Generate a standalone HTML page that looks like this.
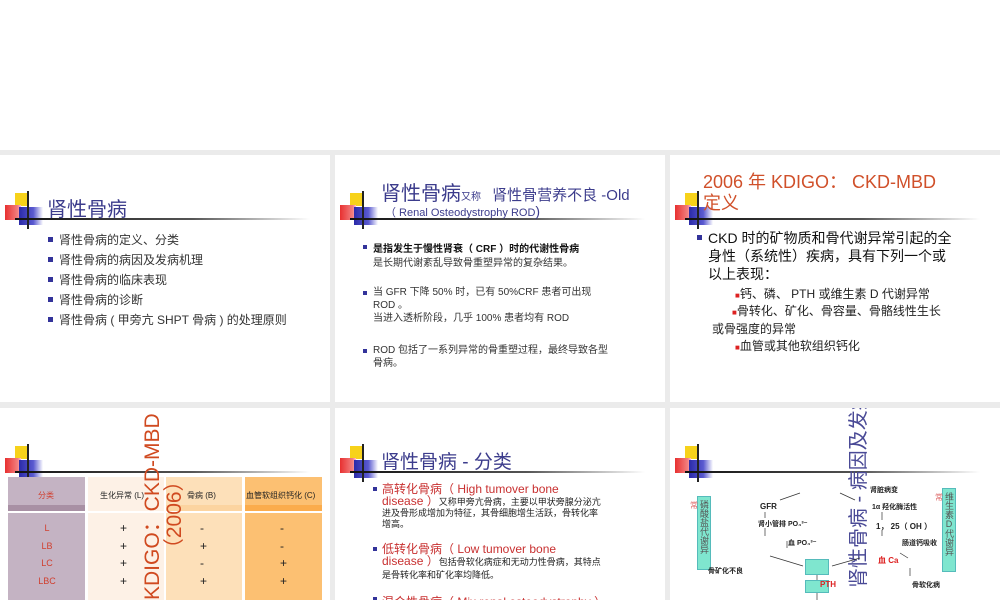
<!DOCTYPE html>
<html><head><meta charset="utf-8"><style>
*{margin:0;padding:0;box-sizing:border-box}
body{width:1000px;height:600px;overflow:hidden;background:#fff;position:relative;font-family:"Liberation Sans","Noto Sans CJK SC",sans-serif;color:#222}
.band{position:absolute;left:0;top:150px;width:1000px;height:450px;background:#ebebeb}
.s{position:absolute;background:#fff;overflow:hidden}
.a{position:absolute;white-space:nowrap}
.logo{position:absolute;left:0;top:0;width:330px;height:80px}
.y{position:absolute;left:15px;top:38px;width:13px;height:13px;background:#f7d21a}
.r{position:absolute;left:5px;top:50px;width:16px;height:15px;background:linear-gradient(90deg,#e83030,#f28080 80%,#fbd)}
.b{position:absolute;left:19px;top:52px;width:24px;height:18px;background:linear-gradient(90deg,#2a2aa8,#5a5ad0 60%,rgba(120,120,220,0))}
.vl{position:absolute;left:27px;top:36px;width:1.5px;height:38px;background:#222}
.hl{position:absolute;left:15px;top:63px;width:295px;height:1.5px;background:linear-gradient(90deg,#111,#555 60%,rgba(0,0,0,0))}
.bu{position:absolute;width:5px;height:5px;background:#33339a}
.t{color:#3c3c8c}
.sm{font-size:12px;color:#333}
.box{position:absolute;background:#7fe6cf;border:1px solid #5bb}
.vt{writing-mode:vertical-rl;text-orientation:upright}
</style></head><body>
<div class="band"></div>

<!-- slide 1 -->
<div class="s" style="left:0;top:155px;width:330px;height:247px">
<div class="logo"><div class="y"></div><div class="r"></div><div class="b"></div><div class="vl"></div><div class="hl"></div></div>
<div class="a t" style="left:47px;top:38px;font-size:20px">肾性骨病</div>
<div class="bu" style="left:48px;top:82px"></div><div class="a sm" style="left:59px;top:76px">肾性骨病的定义、分类</div>
<div class="bu" style="left:48px;top:102px"></div><div class="a sm" style="left:59px;top:96px">肾性骨病的病因及发病机理</div>
<div class="bu" style="left:48px;top:122px"></div><div class="a sm" style="left:59px;top:116px">肾性骨病的临床表现</div>
<div class="bu" style="left:48px;top:142px"></div><div class="a sm" style="left:59px;top:136px">肾性骨病的诊断</div>
<div class="bu" style="left:48px;top:162px"></div><div class="a sm" style="left:59px;top:156px">肾性骨病 ( 甲旁亢 SHPT 骨病 ) 的处理原则</div>
</div>

<!-- slide 2 -->
<div class="s" style="left:335px;top:155px;width:330px;height:247px">
<div class="logo"><div class="y"></div><div class="r"></div><div class="b"></div><div class="vl"></div><div class="hl"></div></div>
<div class="a t" style="left:46px;top:22px;font-size:20px">肾性骨病<span style="font-size:10px">又称</span>&nbsp; <span style="font-size:15px">肾性骨营养不良 -Old</span></div>
<div class="a t" style="left:50px;top:48px;font-size:11px">（ Renal Osteodystrophy ROD<span style="font-size:14px">)</span></div>
<div class="bu" style="left:28px;top:90px;width:4px;height:4px"></div>
<div class="a" style="left:38px;top:85px;font-size:10px;font-weight:bold;color:#111">是指发生于慢性肾衰（ CRF ）时的代谢性骨病</div>
<div class="a" style="left:38px;top:99px;font-size:10px;color:#333">是长期代谢紊乱导致骨重塑异常的复杂结果。</div>
<div class="bu" style="left:28px;top:136px;width:4px;height:4px"></div>
<div class="a" style="left:38px;top:131px;font-size:10px;color:#333;line-height:13px">当 GFR 下降 50% 时，已有 50%CRF 患者可出现<br>ROD 。<br>当进入透析阶段，几乎 100% 患者均有 ROD</div>
<div class="bu" style="left:28px;top:194px;width:4px;height:4px"></div>
<div class="a" style="left:38px;top:189px;font-size:10px;color:#333;line-height:13px">ROD 包括了一系列异常的骨重塑过程，最终导致各型<br>骨病。</div>
</div>

<!-- slide 3 -->
<div class="s" style="left:670px;top:155px;width:330px;height:247px">
<div class="logo"><div class="y"></div><div class="r"></div><div class="b"></div><div class="vl"></div><div class="hl"></div></div>
<div class="a" style="left:33px;top:17px;font-size:18px;color:#d0502a;line-height:21px">2006 年 KDIGO： CKD-MBD<br>定义</div>
<div class="bu" style="left:27px;top:80px"></div>
<div class="a" style="left:38px;top:74px;font-size:14px;color:#111;line-height:18px">CKD 时的矿物质和骨代谢异常引起的全<br>身性（系统性）疾病，具有下列一个或<br>以上表现：</div>
<div class="a" style="left:65px;top:130px;font-size:12px;color:#222;line-height:18px"><span style="color:#d22;font-size:8px">■</span>钙、磷、 PTH 或维生素 D 代谢异常</div>
<div class="a" style="left:42px;top:148px;font-size:12px;color:#222;line-height:16px">&nbsp;&nbsp;&nbsp;&nbsp;&nbsp;&nbsp;<span style="color:#d22;font-size:8px">■</span>骨转化、矿化、骨容量、骨骼线性生长<br>或骨强度的异常</div>
<div class="a" style="left:65px;top:182px;font-size:12px;color:#222"><span style="color:#d22;font-size:8px">■</span>血管或其他软组织钙化</div>
</div>

<!-- slide 4 -->
<div class="s" style="left:0;top:408px;width:330px;height:192px">
<div class="logo"><div class="y"></div><div class="r"></div><div class="b"></div><div class="vl"></div><div class="hl"></div></div>
<div style="position:absolute;left:8px;top:69px;width:77px;height:123px;background:#c4b3c3"></div>
<div style="position:absolute;left:8px;top:97px;width:77px;height:6px;background:#a890a4"></div>
<div style="position:absolute;left:88px;top:69px;width:76px;height:123px;background:#fdf1e6"></div>
<div style="position:absolute;left:166px;top:69px;width:76px;height:123px;background:#fde0b9"></div>
<div style="position:absolute;left:166px;top:97px;width:76px;height:6px;background:#fcd4a0"></div>
<div style="position:absolute;left:245px;top:69px;width:77px;height:123px;background:#fcc072"></div>
<div style="position:absolute;left:245px;top:97px;width:77px;height:6px;background:#fbac4c"></div>
<div style="position:absolute;left:0;top:103px;width:330px;height:2px;background:#fff"></div>
<div class="a" style="left:38px;top:82px;font-size:8px;color:#d04030">分类</div>
<div class="a" style="left:100px;top:82px;font-size:8px;color:#222">生化异常 (L)</div>
<div class="a" style="left:187px;top:82px;font-size:8px;color:#222">骨病 (B)</div>
<div class="a" style="left:246px;top:82px;font-size:8px;color:#222">血管软组织钙化 (C)</div>
<div class="a" style="left:32px;top:112px;font-size:9px;color:#d04030;line-height:17.5px;text-align:center;width:30px">L<br>LB<br>LC<br>LBC</div>
<div class="a" style="left:120px;top:112px;font-size:12px;line-height:17.5px">+<br>+<br>+<br>+</div>
<div class="a" style="left:200px;top:112px;font-size:12px;line-height:17.5px">-<br>+<br>-<br>+</div>
<div class="a" style="left:280px;top:112px;font-size:12px;line-height:17.5px">-<br>-<br>+<br>+</div>
<div class="a" style="left:142px;top:192px;transform:rotate(-90deg);transform-origin:0 0;font-size:21px;color:#d04a20;line-height:22px">KDIGO：CKD-MBD<br>&nbsp;&nbsp;&nbsp;&nbsp;&nbsp;&nbsp;&nbsp;（2006）</div>
</div>

<!-- slide 5 -->
<div class="s" style="left:335px;top:408px;width:330px;height:192px">
<div class="logo"><div class="y"></div><div class="r"></div><div class="b"></div><div class="vl"></div><div class="hl"></div></div>
<div class="a t" style="left:46px;top:39px;font-size:19px">肾性骨病 - 分类</div>
<div class="bu" style="left:38px;top:79px;width:4px;height:4px"></div>
<div class="a" style="left:47px;top:75px;font-size:12px;color:#c83030;line-height:12px">高转化骨病（ High tumover bone<br>disease ）<span style="font-size:9px;color:#222">又称甲旁亢骨病，主要以甲状旁腺分泌亢</span></div>
<div class="a" style="left:47px;top:100px;font-size:9px;color:#222;line-height:11px">进及骨形成增加为特征，其骨细胞增生活跃，骨转化率<br>增高。</div>
<div class="bu" style="left:38px;top:139px;width:4px;height:4px"></div>
<div class="a" style="left:47px;top:135px;font-size:12px;color:#c83030;line-height:12px">低转化骨病（ Low tumover bone<br>disease ）<span style="font-size:9px;color:#222">包括骨软化病症和无动力性骨病，其特点</span></div>
<div class="a" style="left:47px;top:160px;font-size:9px;color:#222">是骨转化率和矿化率均降低。</div>
<div class="bu" style="left:38px;top:189px;width:4px;height:4px"></div>
<div class="a" style="left:47px;top:185px;font-size:12px;color:#c83030">混合性骨病（ Mix renal osteodystrophy ）</div>
</div>

<!-- slide 6 -->
<div class="s" style="left:670px;top:408px;width:330px;height:192px">
<div class="logo"><div class="y"></div><div class="r"></div><div class="b"></div><div class="vl"></div><div class="hl"></div></div>
<div class="box" style="left:27px;top:88px;width:14px;height:74px"></div>
<div class="a vt" style="left:29px;top:92px;font-size:9px;color:#555;line-height:10px">磷酸盐代谢异</div>
<div class="a" style="left:20px;top:92px;font-size:8px;color:#d66">常</div>
<div class="box" style="left:272px;top:80px;width:14px;height:84px"></div>
<div class="a vt" style="left:274px;top:84px;font-size:9px;color:#555;line-height:10px">维生素D代谢异</div>
<div class="a" style="left:265px;top:84px;font-size:8px;color:#d66">常</div>
<div class="a" style="left:178px;top:180px;transform:rotate(-90deg);transform-origin:0 0;font-size:20px;color:#4a4a96;line-height:22px">肾性骨病 - 病因及发病</div>
<div class="a" style="left:200px;top:77px;font-size:7px;font-weight:bold">肾脏病变</div>
<div class="a" style="left:90px;top:94px;font-size:8px;font-weight:bold">GFR</div>
<div class="a" style="left:202px;top:94px;font-size:7px;font-weight:bold">1α 羟化酶活性</div>
<div class="a" style="left:88px;top:111px;font-size:7px;font-weight:bold">肾小管排 PO₄³⁻</div>
<div class="a" style="left:206px;top:113px;font-size:8px;font-weight:bold">1， 25（ OH ）</div>
<div class="a" style="left:118px;top:130px;font-size:7px;font-weight:bold">血 PO₄³⁻</div>
<div class="a" style="left:232px;top:130px;font-size:7px;font-weight:bold">肠道钙吸收</div>
<div class="a" style="left:208px;top:147px;font-size:8px;font-weight:bold;color:#d22">血 Ca</div>
<div class="a" style="left:38px;top:158px;font-size:7px;font-weight:bold">骨矿化不良</div>
<div class="a" style="left:242px;top:172px;font-size:7px;font-weight:bold">骨软化病</div>
<div class="box" style="left:135px;top:151px;width:24px;height:16px"></div>
<div class="box" style="left:135px;top:172px;width:24px;height:13px"></div>
<div class="a" style="left:150px;top:172px;font-size:8px;font-weight:bold;color:#d22">PTH</div>
<svg style="position:absolute;left:0;top:0" width="330" height="192"><g stroke="#333" stroke-width="0.7" fill="none">
<line x1="130" y1="85" x2="110" y2="92"/><line x1="170" y1="85" x2="185" y2="92"/>
<line x1="95" y1="104" x2="95" y2="110"/><line x1="95" y1="120" x2="95" y2="128"/>
<line x1="117" y1="140" x2="117" y2="133"/><line x1="212" y1="104" x2="212" y2="112"/>
<line x1="212" y1="122" x2="212" y2="128"/><line x1="100" y1="148" x2="133" y2="158"/>
<line x1="190" y1="150" x2="162" y2="158"/><line x1="147" y1="167" x2="147" y2="172"/>
<line x1="147" y1="185" x2="147" y2="192"/><line x1="230" y1="145" x2="238" y2="150"/>
<line x1="240" y1="160" x2="240" y2="168"/></g></svg>
</div>
</body></html>
